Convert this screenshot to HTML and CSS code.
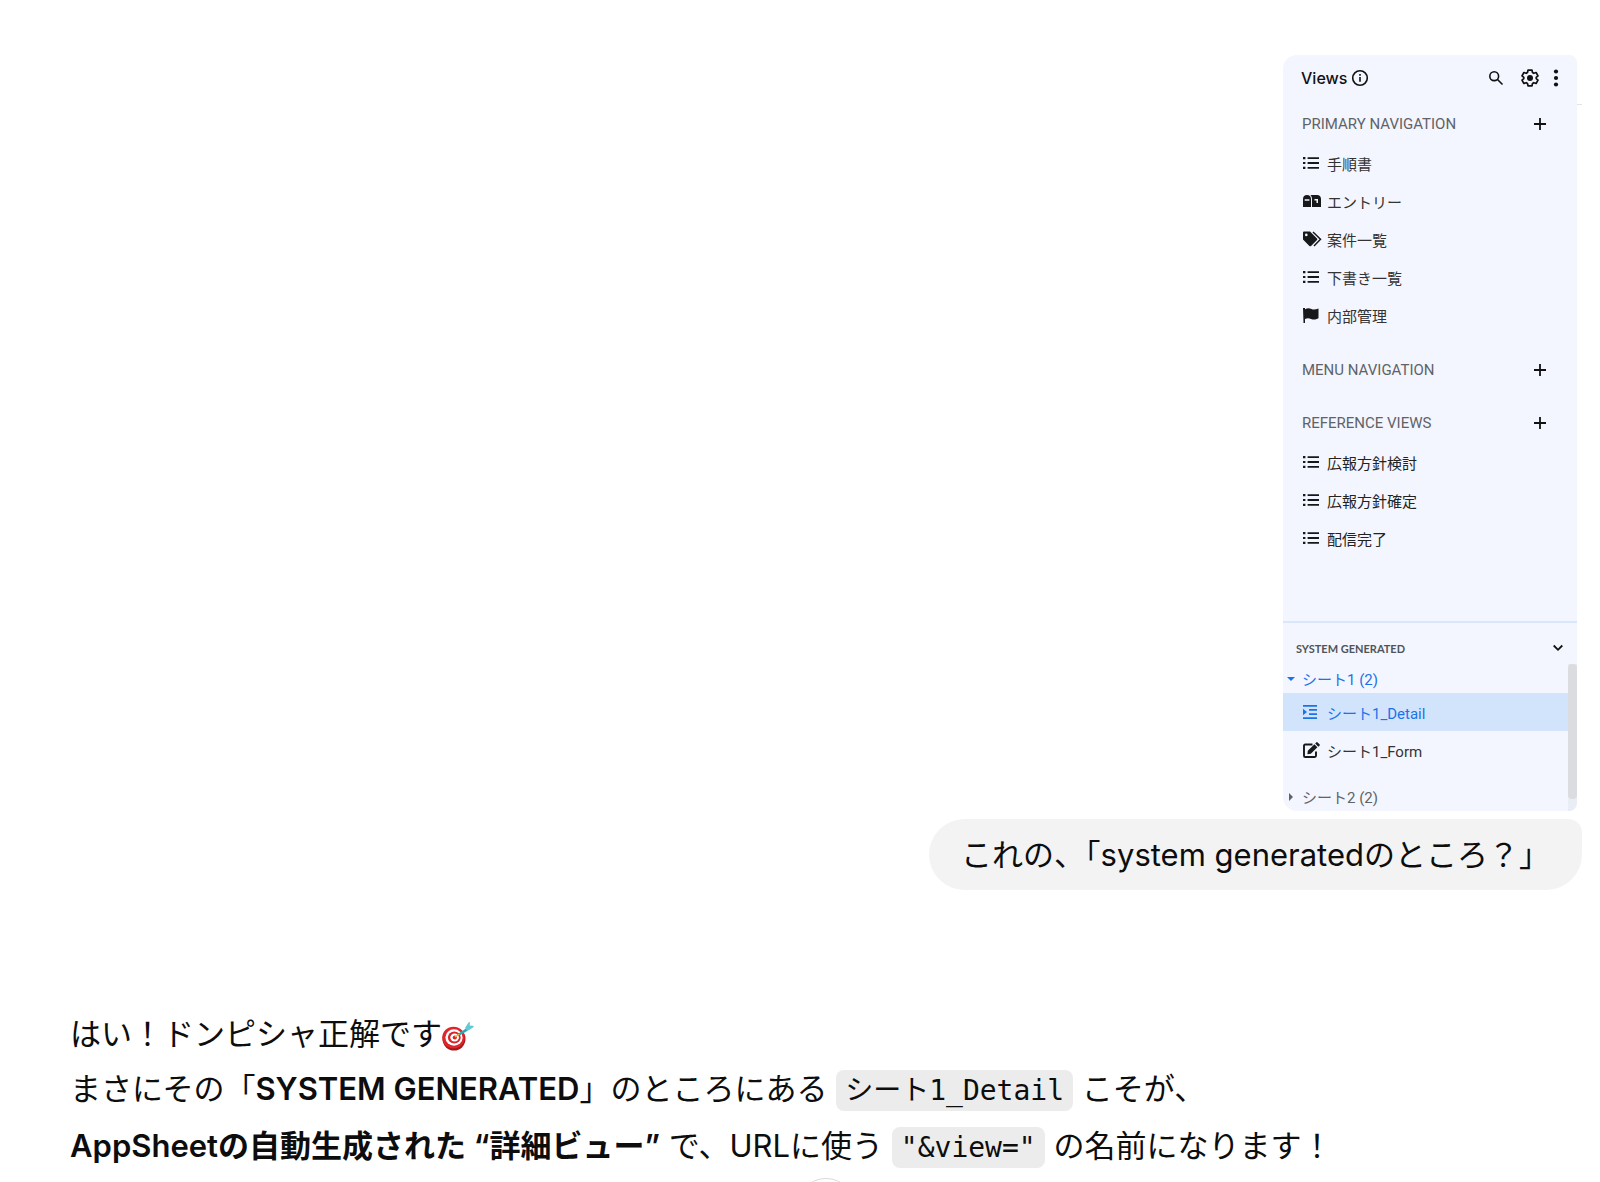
FILE: index.html
```html
<!DOCTYPE html>
<html lang="ja">
<head>
    <meta charset="UTF-8">
    <meta name="viewport" content="width=device-width, initial-scale=1.0">
    <title>Chat</title>
    <link rel="stylesheet" href="styles.css">
</head>
<body>
    <!-- Shared icons -->
    <svg class="sprite" aria-hidden="true">
        <symbol id="icon-list" viewBox="0 0 19 14">
            <path d="M0 1h2.4v2.2H0zM0 5.9h2.4v2.2H0zM0 10.8h2.4V13H0zM4.6 1.2H16V3H4.6zM4.6 6.1H16v1.8H4.6zM4.6 11H16v1.8H4.6z"/>
        </symbol>
        <symbol id="icon-plus" viewBox="0 0 12 12">
            <path d="M6 0v12M0 6h12" fill="none" stroke="currentColor" stroke-width="1.8"/>
        </symbol>
    </svg>

    <main class="chat">
        <section class="message-user">
            <div class="attachment">
                <div class="panel">
                    <header class="panel-header">
                        <h2>Views</h2>
                        <svg class="info" width="18" height="18" viewBox="0 0 18 18" fill="none" stroke="currentColor" stroke-width="1.6"><circle cx="9" cy="9" r="7.3"/><path d="M9 8v4.8M9 5v1.7"/></svg>
                        <button class="icon-button search" aria-label="Search">
                            <svg width="16" height="16" viewBox="0 0 16 16" fill="none" stroke="currentColor" stroke-width="1.6"><circle cx="6.2" cy="6.2" r="4.4"/><path d="M9.5 9.5l5 5"/></svg>
                        </button>
                        <button class="icon-button settings" aria-label="Settings">
                            <svg width="18" height="18" viewBox="0 0 18 18"><path d="M7 1.2h4l.5 2.3 1.3.8 2.3-.8L17 6.900l-1.800 1.500v1.200L17 11.100l-1.900 3.400-2.300-.8-1.300.8-.5 2.300H7l-.5-2.300-1.300-.8-2.300.8L1 11.100l1.800-1.500V8.400L1 6.900l1.900-3.400 2.300.8 1.300-.8z" fill="none" stroke="currentColor" stroke-width="1.7" stroke-linejoin="round"/><circle cx="9" cy="9" r="3" fill="currentColor"/></svg>
                        </button>
                        <button class="icon-button" aria-label="More">
                            <svg width="6" height="18" viewBox="0 0 6 18" fill="currentColor"><circle cx="3" cy="2.5" r="2.1"/><circle cx="3" cy="9" r="2.1"/><circle cx="3" cy="15.5" r="2.1"/></svg>
                        </button>
                    </header>

                    <nav class="views">
                        <div class="section-head">
                            <h3>PRIMARY NAVIGATION</h3>
                            <button class="icon-button" aria-label="Add"><svg width="12" height="12"><use href="#icon-plus"/></svg></button>
                        </div>
                        <ul class="view-list">
                            <li><a href="#"><svg class="icon" viewBox="0 0 19 14"><use href="#icon-list"/></svg>手順書</a></li>
                            <li><a href="#"><svg class="icon" viewBox="0 0 19 14"><path fill-rule="evenodd" d="M0 13V5c0-2.500 1.600-4 4-4s4 1.500 4 4v8zM1.700 5.200v1.500h4.700V5.200zM9 13V5c0-1.700-.6-3.100-1.700-4H14c2.400 0 4 1.500 4 4v8zM11.500 5v1.500h2V9H15V5z"/></svg>エントリー</a></li>
                            <li><a href="#"><svg class="icon" viewBox="0 0 19 16"><path fill-rule="evenodd" d="M0 1.500Q0 .5 1 .5h6l7 7q.8.8 0 1.600L8 15q-.8.7-1.600 0L0 8.500zM3.300 2.600a1.300 1.300 0 100 2.600 1.300 1.300 0 000-2.600z"/><path d="M10 1l7.500 7.200L11 15" fill="none" stroke="currentColor" stroke-width="1.5"/></svg>案件一覧</a></li>
                            <li><a href="#"><svg class="icon" viewBox="0 0 19 14"><use href="#icon-list"/></svg>下書き一覧</a></li>
                            <li><a href="#"><svg class="icon" viewBox="0 0 19 16"><path d="M0 1h2v1.200c3-1.500 4.500-.9 6.500-.1 2.200.9 4.300.5 7-.6v9.700c-3 1.500-5 1.500-7.500.7-2-.7-3.700-.8-6 0V16H.5z"/></svg>内部管理</a></li>
                        </ul>

                        <div class="section-head">
                            <h3>MENU NAVIGATION</h3>
                            <button class="icon-button" aria-label="Add"><svg width="12" height="12"><use href="#icon-plus"/></svg></button>
                        </div>

                        <div class="section-head">
                            <h3>REFERENCE VIEWS</h3>
                            <button class="icon-button" aria-label="Add"><svg width="12" height="12"><use href="#icon-plus"/></svg></button>
                        </div>
                        <ul class="view-list strong">
                            <li><a href="#"><svg class="icon" viewBox="0 0 19 14"><use href="#icon-list"/></svg>広報方針検討</a></li>
                            <li><a href="#"><svg class="icon" viewBox="0 0 19 14"><use href="#icon-list"/></svg>広報方針確定</a></li>
                            <li><a href="#"><svg class="icon" viewBox="0 0 19 14"><use href="#icon-list"/></svg>配信完了</a></li>
                        </ul>
                    </nav>

                    <div class="system">
                        <div class="system-head">
                            <h3>SYSTEM GENERATED</h3>
                            <button class="icon-button" aria-label="Collapse">
                                <svg width="10" height="8" viewBox="0 0 10 8" fill="none" stroke="currentColor" stroke-width="1.8"><path d="M.7 1.500L5 5.800l4.300-4.300"/></svg>
                            </button>
                        </div>
                        <div class="system-body">
                            <div class="tree">
                                <button class="group open"><svg width="8" height="8" viewBox="0 0 8 8"><path d="M0 2h8L4 6z"/></svg>シート1 (2)</button>
                                <ul class="view-list">
                                    <li class="selected"><a href="#"><svg class="icon" viewBox="0 0 19 14"><path d="M0 0h14v1.800H0zM6 4.100h8v1.700H6zM6 8.200h8v1.700H6zM0 12.200h14V14H0zM0 3.800L4 7l-4 3.200z"/></svg>シート1_Detail</a></li>
                                    <li><a href="#"><svg class="icon" viewBox="0 0 19 16"><path d="M9.500 2.500H2.200Q1 2.500 1 3.700v10Q1 15 2.200 15h9.600q1.200 0 1.200-1.200V9.500" fill="none" stroke="currentColor" stroke-width="1.9"/><path d="M4.800 8.800l6.600-6.600 3 3-6.600 6.600-3.400.4zM12.200 1.400l1-1q.7-.6 1.400 0L16.500 2.300q.6.700 0 1.400l-1.100 1z"/></svg>シート1_Form</a></li>
                                </ul>
                                <button class="group"><svg width="8" height="8" viewBox="0 0 8 8"><path d="M2 0l4 4-4 4z"/></svg>シート2 (2)</button>
                            </div>
                            <div class="scrollbar"><div class="thumb"></div></div>
                        </div>
                    </div>
                </div>
            </div>
            <p class="bubble">これの、「system generatedのところ？」</p>
        </section>

        <section class="message-reply">
            <p>
                はい！ドンピシャ正解です<svg class="emoji" role="img" aria-label="dart" viewBox="0 0 32 30"><ellipse cx="12" cy="18" rx="11.5" ry="11.5" fill="#a8161c"/><ellipse cx="11.5" cy="16.5" rx="11.2" ry="10.8" fill="#e0252b"/><ellipse cx="12" cy="16.5" rx="8.6" ry="8.2" fill="#fff"/><ellipse cx="12.3" cy="16.5" rx="6.4" ry="6" fill="#d8252b"/><ellipse cx="12.6" cy="16.5" rx="4.3" ry="4" fill="#fff"/><ellipse cx="12.8" cy="16.5" rx="2.1" ry="2" fill="#d8252b"/><path d="M13 16l6-4" stroke="#e5b93c" stroke-width="1.5"/><path d="M16.500 12.500L24 7.500l1.500 2.300-7.500 4.500z" fill="#2ba8b5"/><path d="M23 7l3.500-5.500L28 1l-.3 3.500L32 5l-1 1.500-5.500 3.500z" fill="#5fcad2"/></svg><br>
                まさにその「<strong>SYSTEM GENERATED</strong>」のところにある <code>シート1_Detail</code> こそが、<br>
                <strong>AppSheetの自動生成された “詳細ビュー”</strong> で、URLに使う <code>"&amp;view="</code> の名前になります！
            </p>
        </section>
    </main>

    <button class="scroll-down" aria-label="Scroll to bottom"></button>
</body>
</html>
```

FILE: styles.css
```css
* {
    box-sizing: border-box;
}

body {
    margin: 0;
    background-color: #fff;
    color: #0d0d0d;
    font-family: Inter, "Noto Sans CJK JP", sans-serif;
}

h2, h3, p, ul {
    margin: 0;
    padding: 0;
}

ul {
    list-style: none;
}

button {
    border: none;
    background: none;
    padding: 0;
    font: inherit;
    color: inherit;
    cursor: pointer;
}

svg {
    display: block;
    flex-shrink: 0;
}

.sprite {
    position: absolute;
    width: 0;
    height: 0;
}

.chat {
    padding: 55px 18px 0 70px;
}

/* User message */
.message-user {
    display: flex;
    flex-direction: column;
    align-items: flex-end;
    gap: 8px;
}

.attachment {
    position: relative;
    padding-right: 5px;
}

/* Edge of the header line behind the panel */
.attachment::after {
    content: "";
    position: absolute;
    top: 49px;
    right: 0;
    width: 5px;
    height: 1px;
    background-color: #e4e4e4;
}

.bubble {
    padding: 8px 32px;
    border-radius: 36px 14px 36px 36px;
    background-color: #f3f3f3;
    font-size: 31px;
    line-height: 55px;
}

/* Views panel */
.panel {
    width: 294px;
    border-radius: 14px 8px 8px 14px;
    overflow: hidden;
    background-color: #f3f6fe;
    color: #111;
    font-family: Roboto, "Noto Sans CJK JP", sans-serif;
    font-size: 15px;
}

.panel-header {
    display: flex;
    align-items: center;
    height: 45px;
    padding: 0 18px;
}

.panel-header h2 {
    font-family: Inter, sans-serif;
    font-size: 16px;
    font-weight: 500;
}

.info {
    margin-left: 4px;
}

.search {
    margin-left: auto;
}

.settings {
    margin: 0 14px 0 17px;
}

.section-head {
    display: flex;
    align-items: center;
    justify-content: space-between;
    height: 40px;
    padding: 0 31px 0 19px;
}

.section-head h3 {
    color: #5f6368;
    font-size: 15px;
    font-weight: 400;
}

.view-list + .section-head {
    margin-top: 16px;
}

.section-head + .section-head {
    margin-top: 13px;
}

.view-list a {
    display: flex;
    align-items: center;
    gap: 5px;
    height: 38px;
    padding-left: 20px;
    color: #333;
    text-decoration: none;
}

.view-list .icon {
    width: 19px;
    fill: currentColor;
    color: #17181a;
}

.view-list.strong a {
    color: #222;
}

.views {
    padding: 4px 0 64px;
}

/* System generated views */
.system {
    border-top: 2px solid #d9e7fb;
}

.system-head {
    display: flex;
    align-items: center;
    justify-content: space-between;
    height: 41px;
    padding: 9px 14px 0 13px;
}

.system-head h3 {
    color: #50545a;
    font-family: Lato, sans-serif;
    font-size: 11px;
    font-weight: 700;
}

.system-body {
    display: flex;
}

.tree {
    flex: 1;
}

.group {
    display: flex;
    align-items: center;
    gap: 7px;
    height: 29px;
    padding-left: 4px;
    color: #5f6368;
}

.group svg {
    fill: currentColor;
}

.group.open {
    color: #1a73e8;
}

.tree .view-list {
    margin-bottom: 13px;
}

.tree .selected {
    background-color: #d2e3fc;
}

.tree .selected a,
.tree .selected .icon {
    color: #1a73e8;
}

.scrollbar {
    width: 9px;
    padding-bottom: 12px;
    background-color: #e9edf5;
}

.thumb {
    height: 100%;
    border-radius: 4px;
    background-color: #dadce0;
}

/* Reply */
.message-reply {
    margin-top: 116px;
    font-size: 31px;
    line-height: 55px;
}

.message-reply strong {
    font-weight: 600;
}

.message-reply code {
    padding: 4px 9px;
    border-radius: 8px;
    background-color: #ececec;
    font-family: "DejaVu Sans Mono", "Noto Sans CJK JP", monospace;
    font-size: 28px;
}

.emoji {
    display: inline-block;
    width: 32px;
    height: 30px;
    vertical-align: -6px;
}

.scroll-down {
    position: fixed;
    bottom: -56px;
    left: calc(50% - 4px);
    width: 60px;
    height: 60px;
    border: 1px solid #d9d9d9;
    border-radius: 50%;
    background-color: #fff;
}
```
